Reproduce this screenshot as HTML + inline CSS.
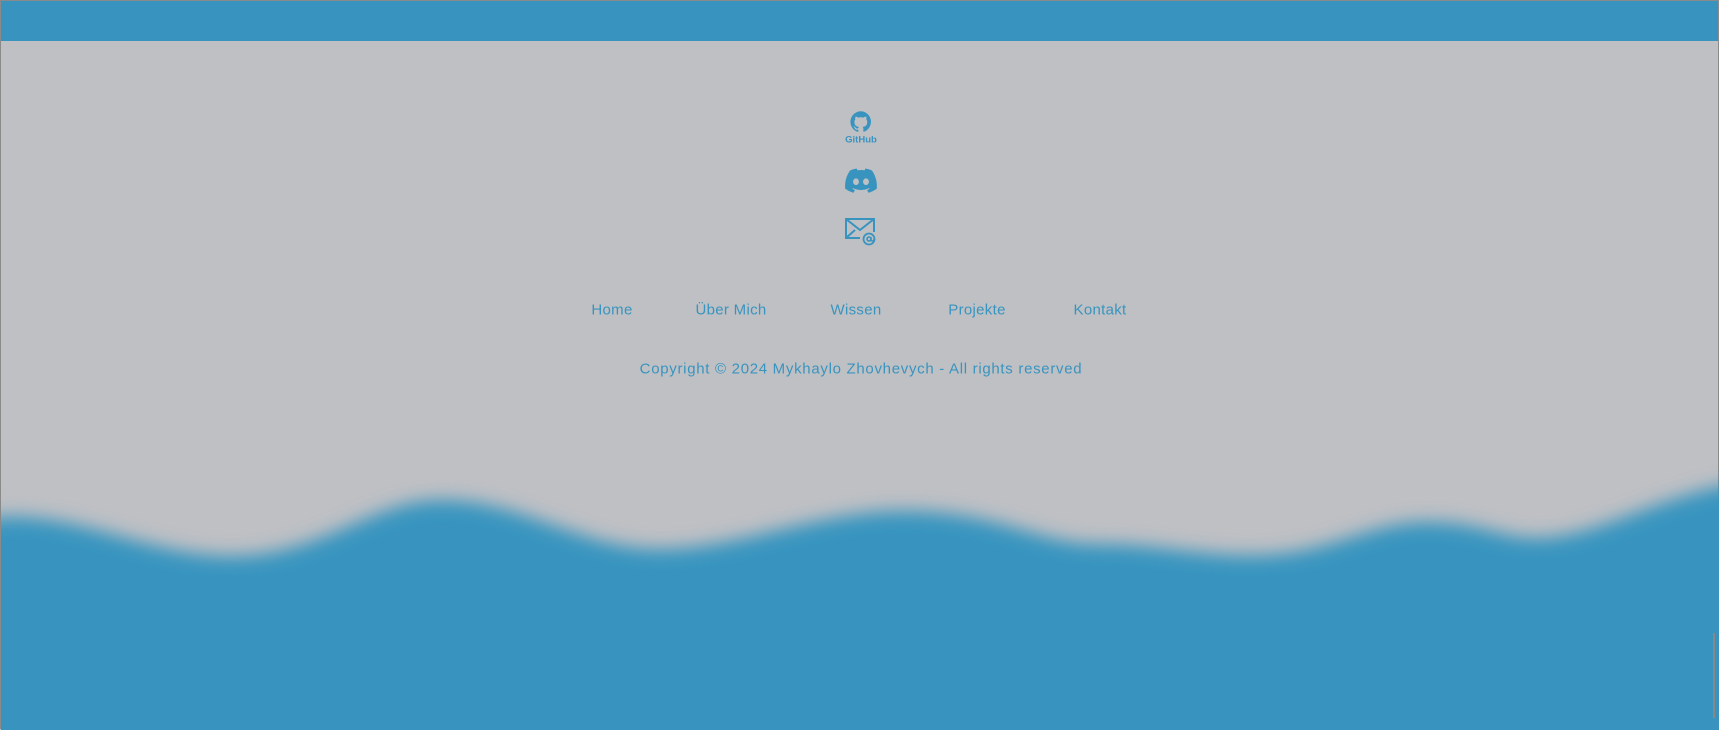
<!DOCTYPE html>
<html><head><meta charset="utf-8"><style>
html,body{margin:0;padding:0;}
body{width:1719px;height:729px;overflow:hidden;background:#bfc0c4;position:relative;font-family:"Liberation Sans",sans-serif;box-sizing:border-box;border:1px solid #8a8a8a;}
.top{position:absolute;left:0;top:0;width:100%;height:40px;background:#3894bf;}
.wave{position:absolute;left:0;top:0;}
.t{position:absolute;color:#3894bf;font-size:15px;white-space:nowrap;transform:translate(-50%,-50%);letter-spacing:0.3px;}
.ic{position:absolute;transform:translate(-50%,-50%);}
.sb{position:absolute;right:3px;top:632px;width:2px;height:85px;background:#888;}
</style></head><body>
<div class="top"></div>
<svg class="wave" width="1719" height="729" viewBox="0 0 1719 729">
<defs><filter id="b" x="-5%" y="-20%" width="110%" height="140%"><feGaussianBlur stdDeviation="9"/></filter></defs>
<path filter="url(#b)" fill="#3894bf" d="M-30 520 C 60 500, 140 555, 230 555 C 320 555, 370 500, 438 499 C 520 498, 580 548, 658 548 C 740 548, 820 508, 910 510 C 1000 512, 1040 543, 1096 543 C 1160 543, 1200 556, 1261 554 C 1330 552, 1370 521, 1425 521 C 1480 521, 1500 537, 1535 537 C 1600 537, 1660 490, 1760 478 L 1760 760 L -30 760 Z"/>
</svg>
<svg class="ic" style="left:860px;top:127px" width="38" height="38" viewBox="0 0 34 34">
<path fill="#3894bf" d="M17 2a9.5 9.5 0 0 0-3 18.5c.5.1.6-.2.6-.4v-1.6c-2.6.5-3.1-1.1-3.1-1.1-.4-1-1-1.3-1-1.3-.8-.6.1-.6.1-.6.9.1 1.4.9 1.4.9.8 1.4 2.1 1 2.6.8.1-.6.3-1 .6-1.2-2-.2-4.1-1-4.1-4.4 0-1 .3-1.8.9-2.4-.1-.2-.4-1.1.1-2.4 0 0 .8-.2 2.5.9a8.6 8.6 0 0 1 4.5 0c1.7-1.1 2.5-.9 2.5-.9.5 1.3.2 2.2.1 2.4.6.6.9 1.4.9 2.4 0 3.4-2.1 4.2-4.1 4.4.3.3.6.8.6 1.6v2.4c0 .2.2.5.6.4A9.5 9.5 0 0 0 17 2z"/>
<text x="17" y="30" text-anchor="middle" font-family="Liberation Sans" font-weight="bold" font-size="8.5" fill="#3894bf">GitHub</text>
</svg>
<svg class="ic" style="left:860px;top:179px" width="34" height="26" viewBox="0 0 34 26">
<path fill="#3894bf" d="M28 3.5A27 27 0 0 0 21.4 1.5l-.8 1.7a25 25 0 0 0-7.2 0l-.8-1.7A27 27 0 0 0 6 3.5C1.8 9.7.7 15.8 1.2 21.8a27 27 0 0 0 8.1 4.1l1.7-2.8a17 17 0 0 1-2.7-1.3l.7-.5a19 19 0 0 0 16 0l.7.5a17 17 0 0 1-2.7 1.3l1.7 2.8a27 27 0 0 0 8.1-4.1c.6-7-1.2-13-4.8-18.3zM12 18c-1.6 0-2.9-1.5-2.9-3.3s1.3-3.3 2.9-3.3 2.9 1.5 2.9 3.3S13.6 18 12 18zm10 0c-1.6 0-2.9-1.5-2.9-3.3s1.3-3.3 2.9-3.3 2.9 1.5 2.9 3.3S23.6 18 22 18z"/>
</svg>
<svg class="ic" style="left:860px;top:231px" width="34" height="30" viewBox="0 0 34 30">
<path fill="none" stroke="#3894bf" stroke-width="2" d="M16 21H2V2h28v13M2 2l14 11L30 2M2 21l9-8"/>
<circle cx="25" cy="22" r="5.5" fill="none" stroke="#3894bf" stroke-width="1.8"/>
<circle cx="25" cy="22" r="2" fill="none" stroke="#3894bf" stroke-width="1.6"/>
<path d="M27 20v3c0 1.5 3 1.5 3-1" fill="none" stroke="#3894bf" stroke-width="1.4"/>
</svg>
<div class="t" style="left:611px;top:309px">Home</div>
<div class="t" style="left:730px;top:309px">Über Mich</div>
<div class="t" style="left:855px;top:309px">Wissen</div>
<div class="t" style="left:976px;top:309px">Projekte</div>
<div class="t" style="left:1099px;top:309px">Kontakt</div>
<div class="t" style="left:860px;top:368px;letter-spacing:0.7px">Copyright © 2024 Mykhaylo Zhovhevych - All rights reserved</div>
<div class="sb"></div>
</body></html>
